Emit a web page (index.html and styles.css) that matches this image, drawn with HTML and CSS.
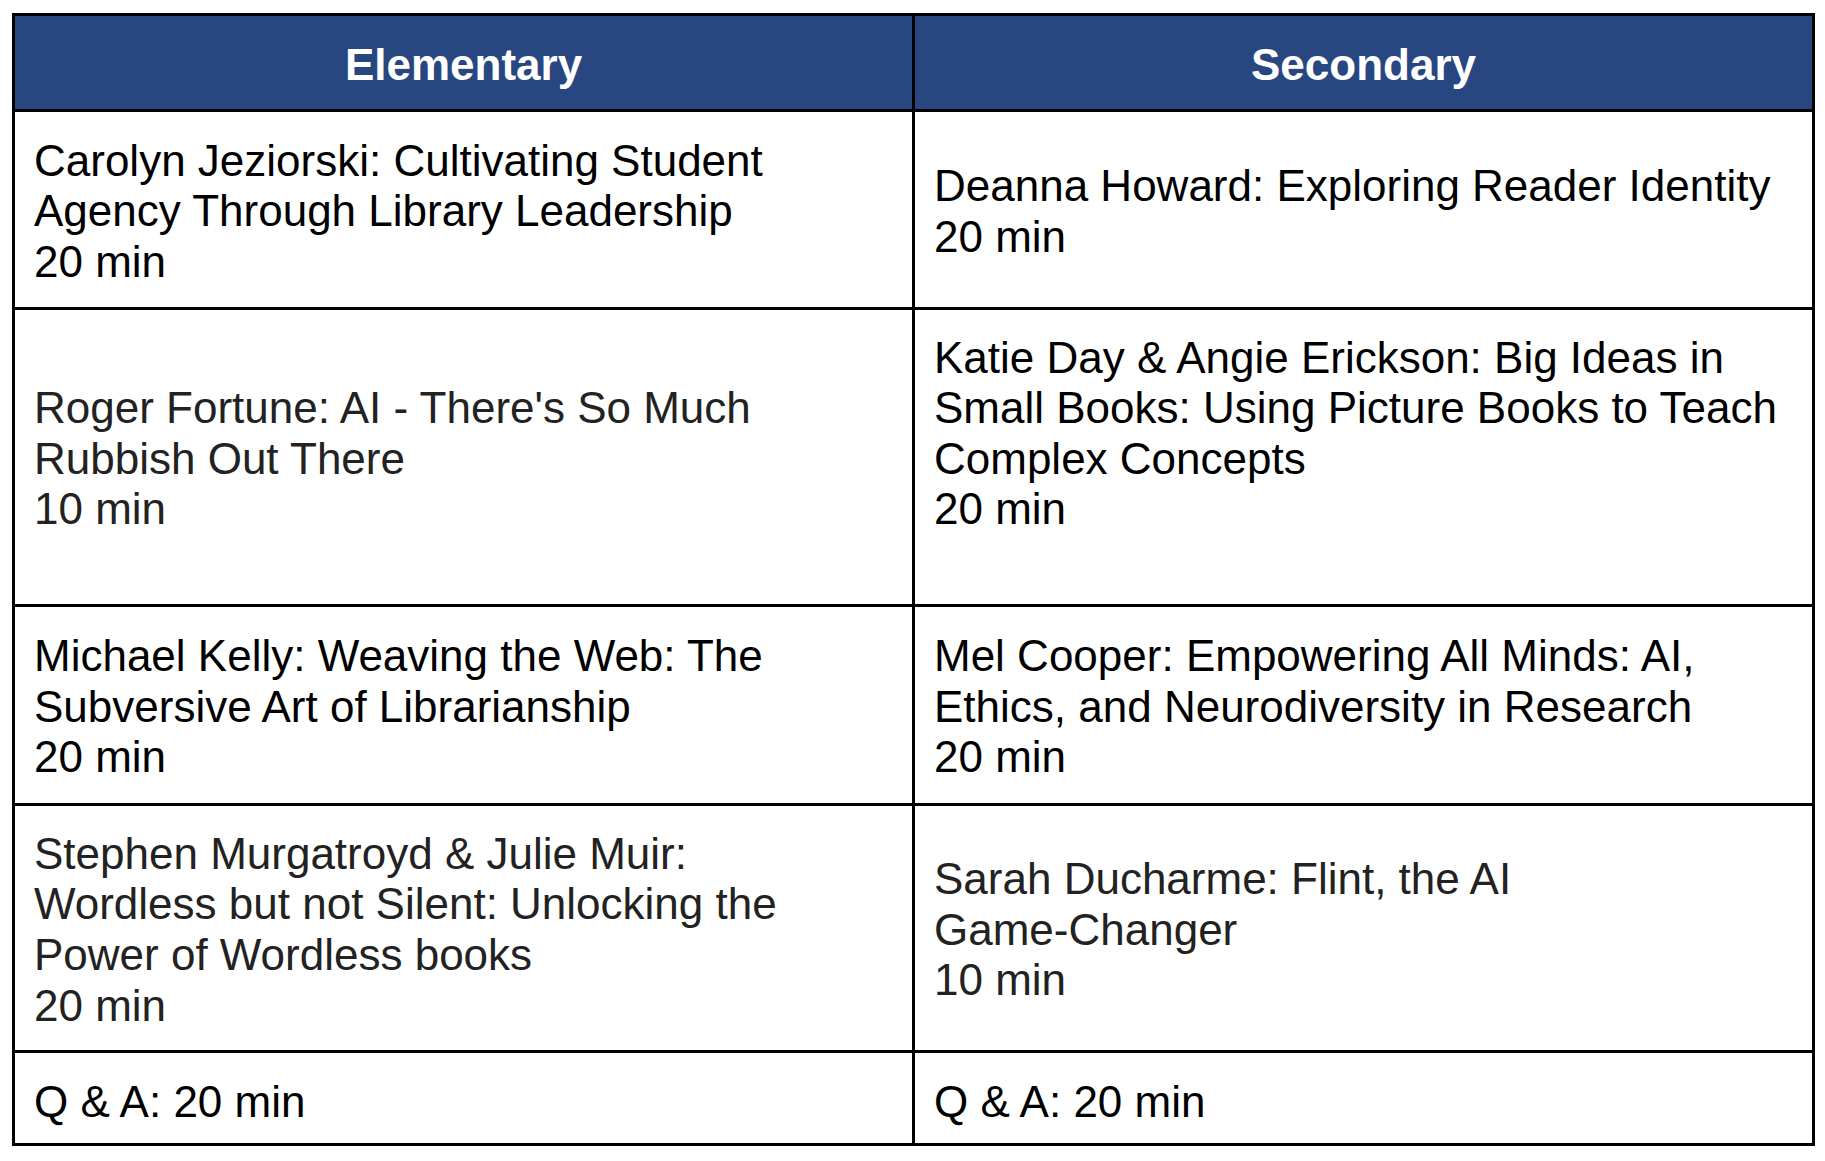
FILE: index.html
```html
<!DOCTYPE html>
<html lang="en">
<head>
<meta charset="utf-8">
<title>Sessions</title>
<link rel="stylesheet" href="styles.css">
</head>
<body>
<div class="page">
  <table class="schedule">
    <thead>
      <tr class="row-head">
        <th>Elementary</th>
        <th>Secondary</th>
      </tr>
    </thead>
    <tbody>
      <tr class="row-1">
        <td><p>Carolyn Jeziorski: Cultivating Student Agency Through Library Leadership</p><p>20 min</p></td>
        <td><p>Deanna Howard: Exploring Reader Identity</p><p>20 min</p></td>
      </tr>
      <tr class="row-2">
        <td class="soft"><p>Roger Fortune: AI - There's So Much Rubbish Out There</p><p>10 min</p></td>
        <td><p>Katie Day &amp; Angie Erickson: Big Ideas in Small Books: Using Picture Books to Teach Complex Concepts</p><p>20 min</p><p class="blank">&nbsp;</p></td>
      </tr>
      <tr class="row-3">
        <td><p>Michael Kelly: Weaving the Web: The Subversive Art of Librarianship</p><p>20 min</p></td>
        <td><p>Mel Cooper: Empowering All Minds: AI, Ethics, and Neurodiversity in Research</p><p>20 min</p></td>
      </tr>
      <tr class="row-4">
        <td class="soft"><p>Stephen Murgatroyd &amp; Julie Muir:<br>Wordless but not Silent: Unlocking the Power of Wordless books</p><p>20 min</p></td>
        <td class="soft"><p>Sarah Ducharme: Flint, the AI <span class="nowrap">Game-Changer</span></p><p>10 min</p></td>
      </tr>
      <tr class="row-5">
        <td><p>Q &amp; A: 20 min</p></td>
        <td><p>Q &amp; A: 20 min</p></td>
      </tr>
    </tbody>
  </table>
</div>
</body>
</html>
```

FILE: styles.css
```css
html, body {
  margin: 0;
  padding: 0;
  background: #ffffff;
}

.page {
  padding: 13px 0 0 12px;
}

.schedule {
  box-sizing: border-box;
  width: 1803px;
  table-layout: fixed;
  border-collapse: separate;
  border-spacing: 0;
  border-left: 3px solid #000;
  border-top: 3px solid #000;
  font-family: "Liberation Sans", Arial, sans-serif;
  font-size: 44px;
  line-height: 50.6px;
  color: #000;
}

.schedule th,
.schedule td {
  box-sizing: border-box;
  width: 50%;
  border-right: 3px solid #000;
  border-bottom: 3px solid #000;
  padding: 4px 20px 0 19px;
  vertical-align: middle;
  text-align: left;
}

.schedule th {
  background: #284680;
  color: #ffffff;
  font-weight: bold;
  text-align: center;
  padding: 5px 0 0 0;
}

.schedule p {
  margin: 0;
}

.schedule .soft {
  color: #222222;
}

.nowrap {
  white-space: nowrap;
}

.row-head th { height: 96px; }
.row-1 td { height: 198px; }
.row-2 td { height: 297px; }
.row-3 td { height: 199px; }
.row-4 td { height: 247px; }
.row-5 td { height: 93px; padding-top: 8px; }
```
